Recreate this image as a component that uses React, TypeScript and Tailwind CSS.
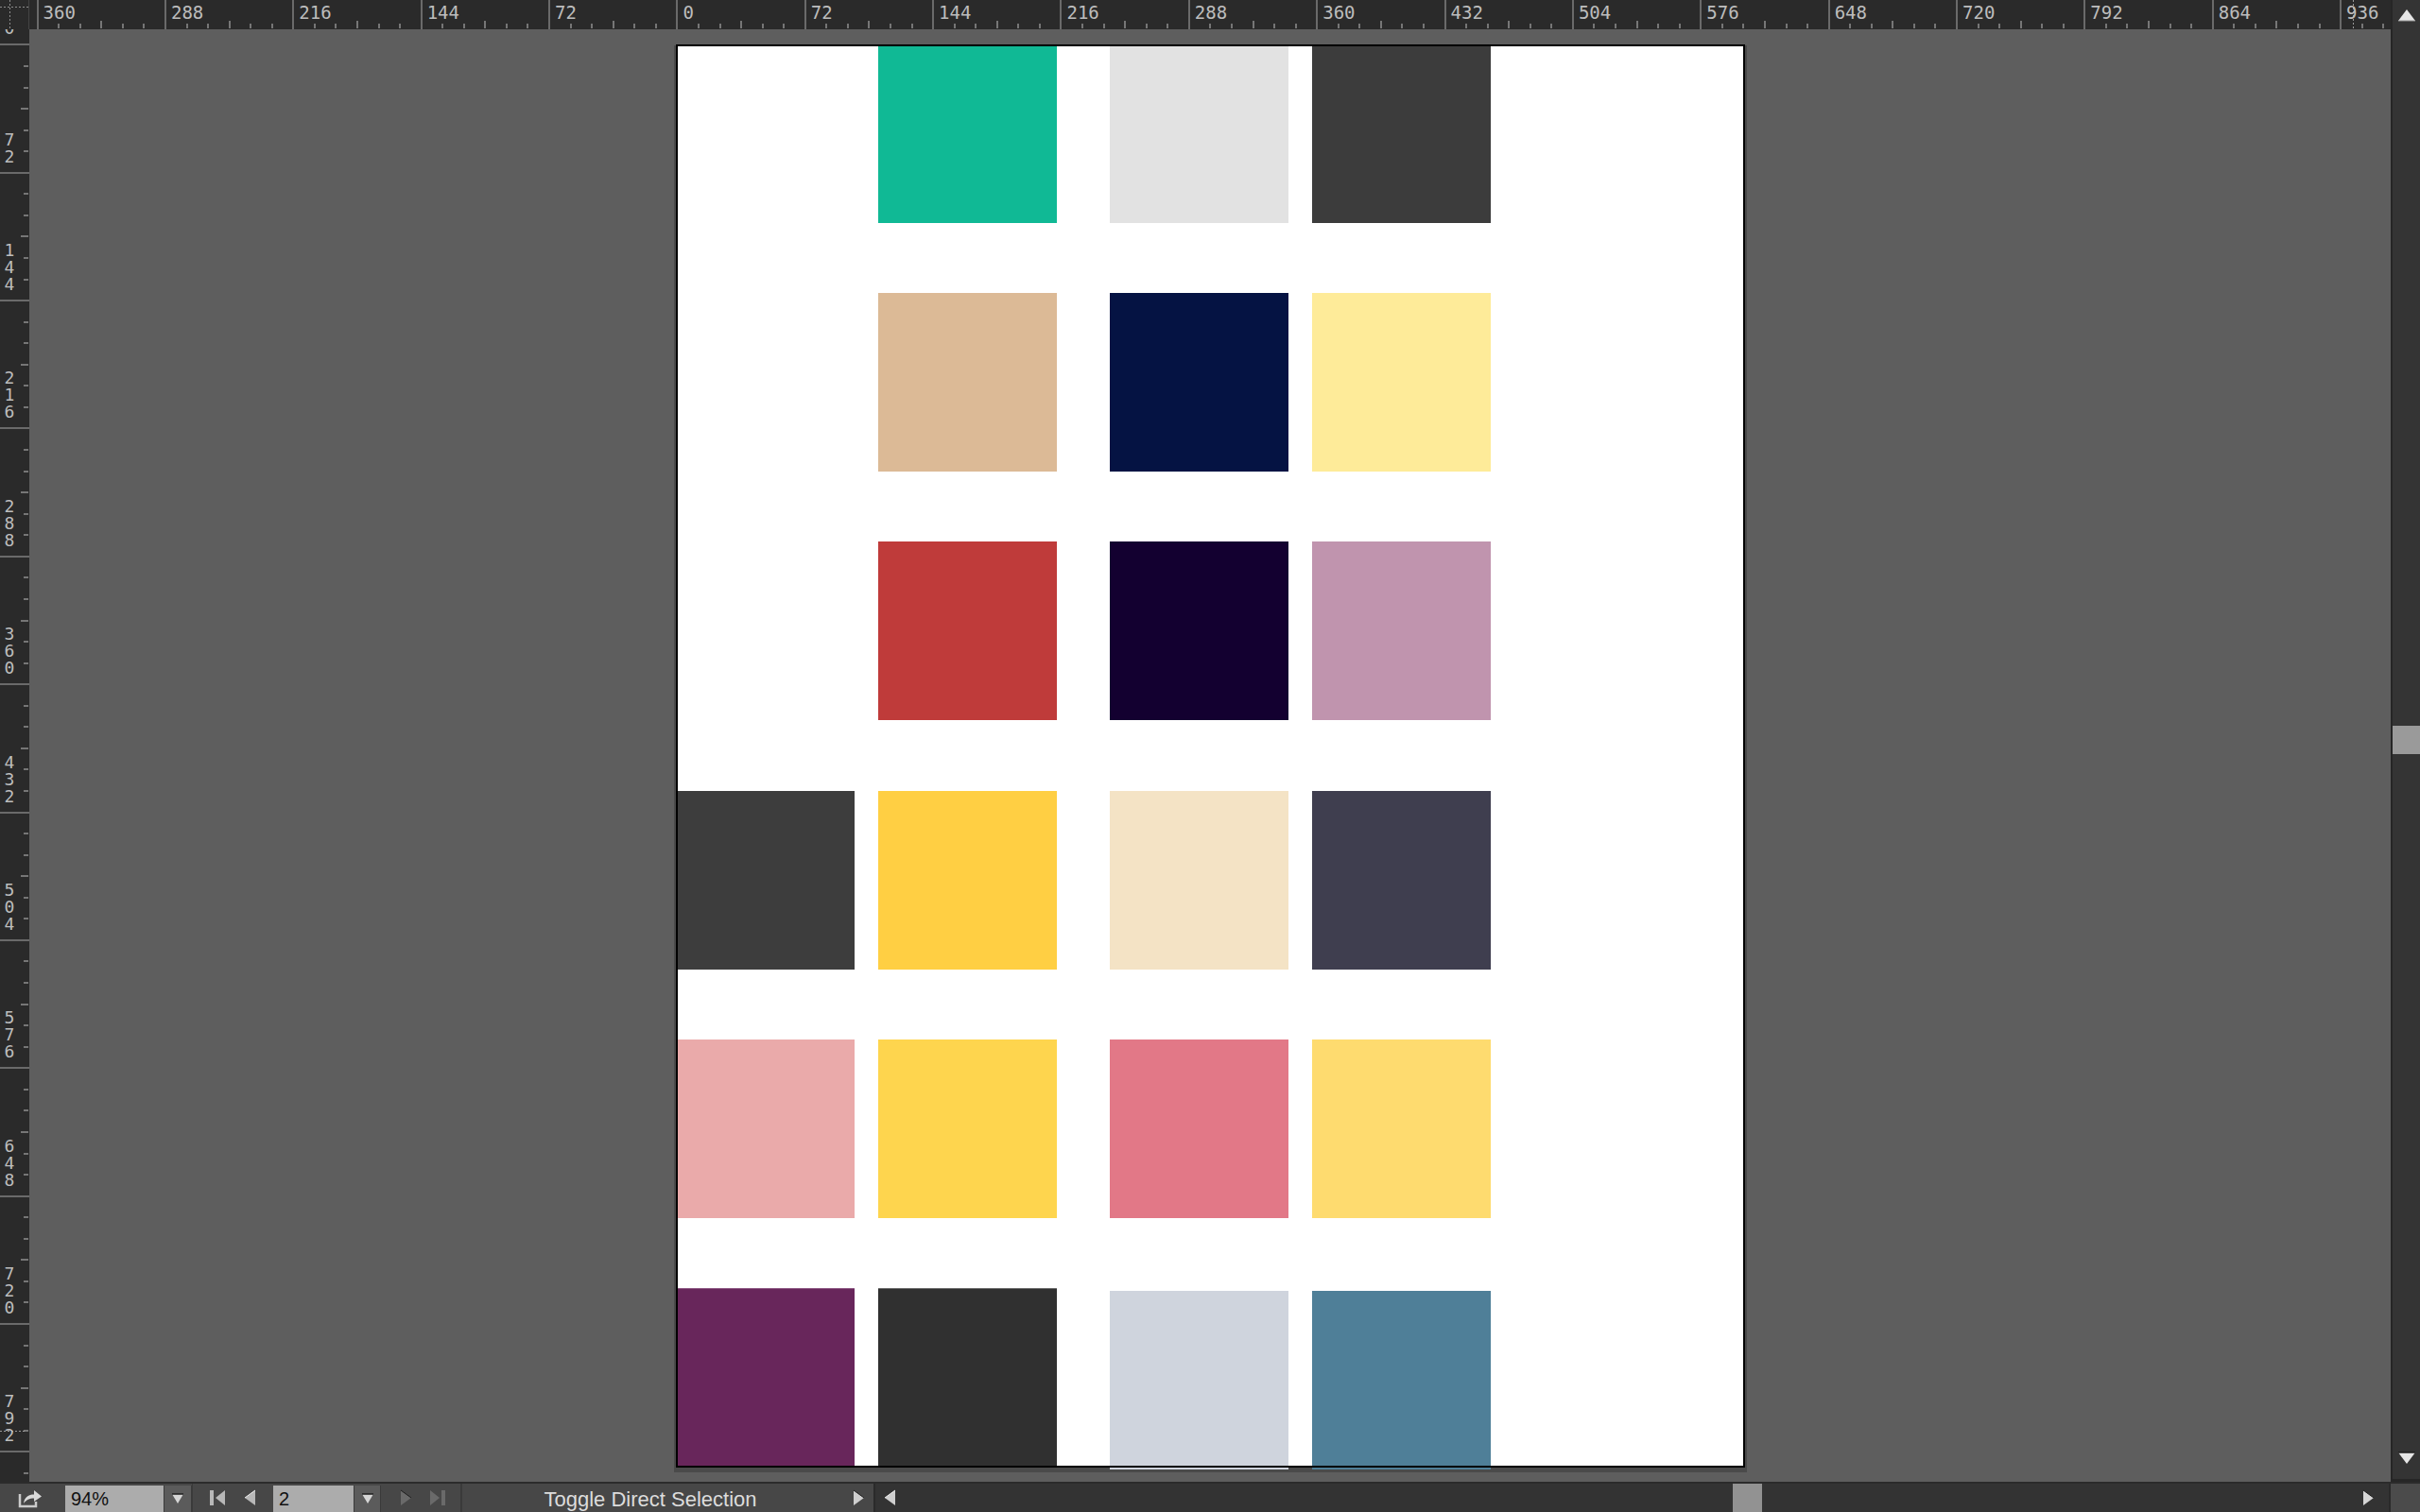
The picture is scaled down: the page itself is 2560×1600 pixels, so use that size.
import React from "react";

const PX = 1.88;
const MINOR = 12 * PX;

type Tick = { pos: number; kind: "major" | "mid" | "minor"; label?: string };

function makeTicks(zero: number, length: number): Tick[] {
  const out: Tick[] = [];
  const start = -Math.ceil(zero / MINOR) - 2;
  for (let j = start; zero + j * MINOR < length + 4; j++) {
    const pos = zero + j * MINOR;
    if (pos < -4) continue;
    const m = ((j % 6) + 6) % 6;
    if (m === 0) out.push({ pos, kind: "major", label: String(Math.abs((j / 6) * 72)) });
    else if (m === 3) out.push({ pos, kind: "mid" });
    else out.push({ pos, kind: "minor" });
  }
  return out;
}

function Corner() {
  return (
    <div className="h-[31px] w-[31px] shrink-0 bg-[#2a2a2a] border-r border-[#444]">
      <svg width="31" height="31" viewBox="0 0 31 31">
        <line x1="0" y1="7.5" x2="30" y2="7.5" stroke="#8c8c8c" strokeWidth="1" strokeDasharray="2 2" />
        <line x1="10.5" y1="0" x2="10.5" y2="30" stroke="#8c8c8c" strokeWidth="1" strokeDasharray="2 2" />
      </svg>
    </div>
  );
}

function TopRuler() {
  const W = 2498;
  const H = 31;
  const zero = 685.4;
  const ticks = makeTicks(zero, W);
  return (
    <div className="relative h-[31px] w-[2498px] overflow-hidden bg-[#2a2a2a]">
      <svg width={W} height={H} className="absolute left-0 top-0">
        {ticks.map((t, i) => {
          const x = Math.round(t.pos);
          if (t.kind === "major")
            return <line key={i} x1={x} x2={x} y1={0} y2={H} stroke="#6a6a6a" strokeWidth={2} />;
          const y1 = t.kind === "mid" ? 22 : 25;
          return <line key={i} x1={x} x2={x} y1={y1} y2={30} stroke="#767676" strokeWidth={2} />;
        })}
        <line x1={2458.5} x2={2458.5} y1={0} y2={31} stroke="#9a9a9a" strokeWidth={1} strokeDasharray="2 2" />
      </svg>
      {ticks
        .filter((t) => t.label !== undefined)
        .map((t, i) => (
          <span
            key={i}
            style={{ left: t.pos + 6 }}
            className="absolute top-[4px] font-['DejaVu_Sans_Mono',monospace] text-[19px] leading-[18px] text-[#bdbdbd]"
          >
            {t.label}
          </span>
        ))}
    </div>
  );
}

function LeftRuler() {
  const W = 31;
  const H = 1537;
  const zero = 16.4;
  const ticks = makeTicks(zero, H);
  return (
    <div className="relative h-[1537px] w-[31px] shrink-0 overflow-hidden bg-[#2a2a2a]">
      <svg width={W} height={H} className="absolute left-0 top-0">
        {ticks.map((t, i) => {
          const y = Math.round(t.pos);
          if (t.kind === "major")
            return <line key={i} x1={0} x2={W} y1={y} y2={y} stroke="#6a6a6a" strokeWidth={2} />;
          const x1 = t.kind === "mid" ? 22 : 25;
          return <line key={i} x1={x1} x2={30} y1={y} y2={y} stroke="#767676" strokeWidth={2} />;
        })}
        <line x1={0} x2={27} y1={1483.5} y2={1483.5} stroke="#9a9a9a" strokeWidth={1} strokeDasharray="2 2" />
      </svg>
      {ticks
        .filter((t) => t.label !== undefined)
        .map((t, i) => {
          const digits = (t.label as string).split("");
          return (
            <div
              key={i}
              style={{ top: t.pos - 8 - 18 * digits.length }}
              className="absolute left-[4px] flex w-[12px] flex-col items-center font-['DejaVu_Sans_Mono',monospace] text-[18px] leading-[18px] text-[#bdbdbd]"
            >
              {digits.map((d, k) => (
                <span key={k}>{d}</span>
              ))}
            </div>
          );
        })}
    </div>
  );
}

type Cell = { c?: string; extra?: string };

const ROWS: Cell[][] = [
  [{}, { c: "bg-[#10b995]" }, { c: "bg-[#e2e2e2]" }, { c: "bg-[#3c3c3c]" }],
  [{}, { c: "bg-[#dcba96]" }, { c: "bg-[#051343]" }, { c: "bg-[#feeb99]" }],
  [{}, { c: "bg-[#bf3b3a]" }, { c: "bg-[#130030]" }, { c: "bg-[#c094ae]" }],
  [{ c: "bg-[#3d3d3d]" }, { c: "bg-[#ffcf43]" }, { c: "bg-[#f4e3c5]" }, { c: "bg-[#3f3e4f]" }],
  [{ c: "bg-[#eaaaaa]" }, { c: "bg-[#fed54e]" }, { c: "bg-[#e27887]" }, { c: "bg-[#fedb6f]" }],
  [
    { c: "bg-[#68265b]", extra: "border-t border-[#8e5a85]" },
    { c: "bg-[#303030]", extra: "border-t border-[#6c6c6c]" },
    { c: "bg-[#cfd4dd]", extra: "mt-[3px]" },
    { c: "bg-[#4f7f98]", extra: "mt-[3px]" },
  ],
];

function Page() {
  return (
    <div className="relative h-[1506px] w-[1131px] bg-white shadow-[0_3px_0_2px_#4a4a4a]">
      <div className="grid grid-cols-[214px_245px_214px_189px] gap-y-[74.2px]">
        {ROWS.map((row, r) =>
          row.map((cell, c) => (
            <div key={`${r}-${c}`} className="h-[189px] w-[189px]">
              {cell.c ? <div className={`h-[189px] w-[189px] ${cell.c} ${cell.extra ?? ""}`} /> : null}
            </div>
          ))
        )}
      </div>
      <div className="pointer-events-none absolute inset-0 border-2 border-black" />
    </div>
  );
}

function Canvas() {
  return (
    <div className="h-[1537px] flex-1 overflow-hidden bg-[#5e5e5e] pl-[684px] pt-[16px]">
      <Page />
    </div>
  );
}

function TriUp({ color = "#e6e6e6" }: { color?: string }) {
  return (
    <svg width="20" height="14" viewBox="0 0 20 14">
      <polygon points="10,1 19,13 1,13" fill={color} />
      <line x1="1" y1="13" x2="19" y2="13" stroke="#9a9a9a" strokeWidth="1" />
    </svg>
  );
}

function TriDown({ w = 20, h = 14, color = "#e6e6e6" }: { w?: number; h?: number; color?: string }) {
  return (
    <svg width={w} height={h} viewBox={`0 0 ${w} ${h}`}>
      <polygon points={`1,1 ${w - 1},1 ${w / 2},${h - 1}`} fill={color} />
      <line x1="1" y1="1" x2={w - 1} y2="1" stroke="#1e1e1e" strokeWidth="1.5" />
    </svg>
  );
}

function TriLeft({ color = "#c8c8c8" }: { color?: string }) {
  return (
    <svg width="13" height="18" viewBox="0 0 13 18">
      <polygon points="12,1 12,17 1,9" fill={color} />
      <line x1="1" y1="9" x2="12" y2="1" stroke="#f0f0f0" strokeWidth="1" />
    </svg>
  );
}

function TriRight({ color = "#c8c8c8" }: { color?: string }) {
  return (
    <svg width="13" height="18" viewBox="0 0 13 18">
      <polygon points="1,1 1,17 12,9" fill={color} />
      <line x1="1" y1="1" x2="12" y2="9" stroke="#1e1e1e" strokeWidth="1" />
    </svg>
  );
}

function FirstIcon({ color = "#b8b8b8" }: { color?: string }) {
  return (
    <svg width="18" height="18" viewBox="0 0 18 18">
      <rect x="1" y="1" width="4" height="16" fill={color} />
      <polygon points="17,1 17,17 7,9" fill={color} />
    </svg>
  );
}

function LastIcon({ color = "#6a6a6a" }: { color?: string }) {
  return (
    <svg width="18" height="18" viewBox="0 0 18 18">
      <polygon points="1,1 1,17 11,9" fill={color} />
      <rect x="13" y="1" width="4" height="16" fill={color} />
    </svg>
  );
}

function ExportIcon() {
  return (
    <svg width="27" height="22" viewBox="0 0 27 22">
      <path d="M2 7 V20 H19 V15" fill="none" stroke="#cbcbcb" strokeWidth="2.5" />
      <path d="M6 17 C7 10 11 7.5 17 7.5 V3 L25 9.5 L17 15 V11.5 C12 11.5 9 13 6 17 Z" fill="#dadada" />
    </svg>
  );
}

function VScroll() {
  return (
    <div className="flex h-[1568px] w-[31px] flex-col border-l-2 border-[#262626] bg-[#343434]">
      <div className="flex h-[30px] shrink-0 items-start justify-center pt-[9px]">
        <TriUp />
      </div>
      <div className="h-[738px] shrink-0" />
      <div className="h-[30px] shrink-0 bg-[#9a9a9a]" />
      <div className="flex-1" />
      <div className="flex h-[33px] shrink-0 items-start justify-center pt-[4px]">
        <TriDown />
      </div>
      <div className="h-[3px] shrink-0 bg-[#262626]" />
    </div>
  );
}

function Dropdown({ w }: { w: string }) {
  return (
    <div className={`flex h-full ${w} items-center justify-center border-x border-[#3a3a3a] bg-[#5b5b5b]`}>
      <TriDown w={14} h={12} color="#d6d6d6" />
    </div>
  );
}

function BottomBar() {
  return (
    <div className="flex h-[32px] w-[2560px] border-t-2 border-[#2b2b2b] bg-[#474747] font-['Liberation_Sans',Arial,sans-serif]">
      <div className="flex w-[69px] shrink-0 items-center pl-[19px]">
        <ExportIcon />
      </div>
      <div className="flex w-[134px] shrink-0 pt-[2px]">
        <div className="flex h-full w-[104px] items-center bg-[#acacac] pl-[6px] text-[20px] text-[#111]">94%</div>
        <Dropdown w="w-[30px]" />
      </div>
      <div className="flex w-[86px] shrink-0 items-center gap-[19px] border-l border-[#3a3a3a] pl-[17px]">
        <FirstIcon />
        <TriLeft color="#b8b8b8" />
      </div>
      <div className="flex w-[114px] shrink-0 pt-[2px]">
        <div className="flex h-full w-[85px] items-center bg-[#acacac] pl-[6px] text-[20px] text-[#111]">2</div>
        <Dropdown w="w-[29px]" />
      </div>
      <div className="flex w-[84px] shrink-0 items-center gap-[18px] pl-[20px]">
        <TriRight color="#6a6a6a" />
        <LastIcon />
      </div>
      <div className="flex w-[412px] shrink-0 items-center justify-center border-l-2 border-[#3a3a3a] pt-[3px] pr-[12px] text-[22px] text-[#dcdcdc]">
        Toggle Direct Selection
      </div>
      <div className="flex w-[25px] shrink-0 items-center pl-[3px]">
        <TriRight color="#cfcfcf" />
      </div>
      <div className="flex w-[1603px] shrink-0 items-center border-l-2 border-[#2a2a2a] bg-[#333333]">
        <div className="flex h-full w-[30px] shrink-0 items-center pl-[9px]">
          <TriLeft color="#cfcfcf" />
        </div>
        <div className="w-[877px] shrink-0" />
        <div className="h-full w-[31px] shrink-0 bg-[#929292]" />
        <div className="flex-1" />
        <div className="flex h-full w-[28px] shrink-0 items-center">
          <TriRight color="#d6d6d6" />
        </div>
      </div>
      <div className="w-[33px] shrink-0 border-l-2 border-[#2a2a2a] bg-[#4b4b4b]" />
    </div>
  );
}

export default function App() {
  return (
    <div className="flex h-[1600px] w-[2560px] flex-col overflow-hidden bg-[#5e5e5e]">
      <div className="flex h-[1568px]">
        <div className="flex w-[2529px] flex-col">
          <div className="flex h-[31px]">
            <Corner />
            <TopRuler />
          </div>
          <div className="flex h-[1537px] overflow-hidden">
            <LeftRuler />
            <Canvas />
          </div>
        </div>
        <VScroll />
      </div>
      <BottomBar />
    </div>
  );
}
